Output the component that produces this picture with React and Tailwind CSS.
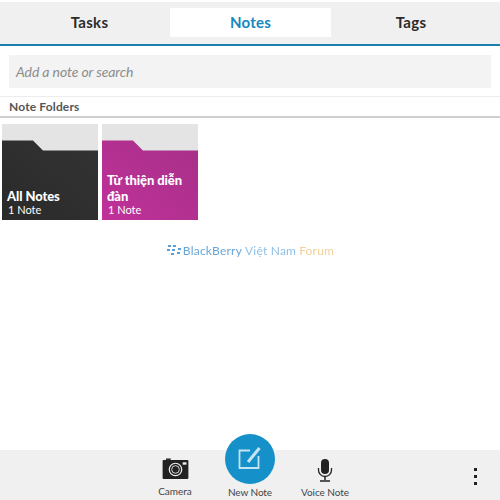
import React from "react";

const Folder = ({ id, name, from, to }) => {
  return (
    <div className="relative w-[96px] h-[96px] bg-[#e4e4e4] overflow-hidden">
      <svg className="absolute left-0 top-0 w-full h-full" viewBox="0 0 96 96">
        <defs>
          <linearGradient id={id} x1="0" y1="1" x2="1" y2="0">
            <stop offset="0" stopColor={from} />
            <stop offset="1" stopColor={to} />
          </linearGradient>
        </defs>
        <path d="M0 16.5 H31 L41 26.5 H96 V96 H0 Z" fill={`url(#${id})`} />
      </svg>
      <div className="absolute left-[5px] right-[2px] bottom-[3px] text-white">
        <div className="font-black text-[13px] leading-[16px] tracking-[-0.1px]">{name}</div>
        <div className="text-[11px] leading-[14px] ml-[1px] -mt-[1px]">1 Note</div>
      </div>
    </div>
  );
};

const App = () => {
  return (
    <div className="w-[500px] h-[500px] flex flex-col bg-white overflow-hidden font-['Lato',sans-serif]">
      <div className="h-[44px] mt-[2px] shrink-0 bg-[#f0f0f0] border-b-2 border-[#1a80ac] grid grid-cols-[170px_161px_169px] pt-[6px] pb-[7px]">
        <div className="flex items-center justify-center font-bold text-[15px] text-[#2b2b2b] tracking-[0.3px] pl-[9px]">Tasks</div>
        <div className="flex items-center justify-center bg-white font-bold text-[15px] text-[#1588c0] tracking-[0.2px]">Notes</div>
        <div className="flex items-center justify-center font-bold text-[15px] text-[#2b2b2b] tracking-[0.3px] pr-[9px]">Tags</div>
      </div>

      <div className="px-[9px] pt-[9px] pb-[8px] border-b border-[#ececec]">
        <div className="h-[33px] bg-[#f3f3f3] flex items-center px-[7px] text-[14px] italic text-[#8c8c8c] tracking-[-0.1px]">
          Add a note or search
        </div>
      </div>

      <div className="h-[21px] pl-[9px] flex items-center font-bold text-[12px] text-[#555] border-b-2 border-[#cfcfcf] tracking-[0.15px]">
        Note Folders
      </div>

      <div className="flex gap-[4px] pl-[2px] pt-[6px]">
        <Folder id="dark" name="All Notes" from="#2a2a2a" to="#333333" />
        <Folder id="pink" name="Từ thiện diễn đàn" from="#c0319a" to="#a63088" />
      </div>

      <div className="flex-1">
        <div className="mt-[22px] ml-[1px] flex items-center justify-center gap-[2px] text-[12px] blur-[0.5px] tracking-[0.2px]">
          <svg width="14" height="12" viewBox="0 0 14 12" fill="#5b9fd6">
            <rect x="1" y="0" width="3" height="2" />
            <rect x="6" y="0" width="3" height="2" />
            <rect x="0" y="4" width="3" height="2" />
            <rect x="5" y="4" width="3" height="2" />
            <rect x="11" y="3" width="3" height="2" />
            <rect x="4" y="8" width="3" height="2" />
            <rect x="10" y="7" width="3" height="2" />
          </svg>
          <span className="text-[#6aa5d8]">BlackBerry</span>
          <span className="text-[#8fbfe6] ml-[1px]">Việt Nam</span>
          <span className="text-[#f2cf9a] ml-[1px]">Forum</span>
        </div>
      </div>

      <div className="relative h-[50px] shrink-0 bg-[#f0f0f0] text-[10px] text-[#444]">
        <div className="absolute left-[225px] top-[-16px] w-[50px] h-[50px] rounded-full bg-[#1590c8] flex items-center justify-center">
          <svg width="24" height="24" viewBox="0 0 24 24" fill="none" stroke="#c4e4f3" strokeWidth="1.8">
            <path d="M12 3.5 H1.5 V21 H20.5 V9" />
            <path d="M10 15 L21.5 1" strokeWidth="3" />
          </svg>
        </div>
        <div className="absolute left-[150px] top-[8px] w-[50px] flex flex-col items-center">
          <svg width="27" height="21" viewBox="0 0 28 22">
            <path d="M4 0.5 H9 V2 H4 Z" fill="#222" />
            <rect x="0.5" y="2" width="27" height="20" rx="1" fill="#222" />
            <circle cx="14" cy="12" r="6.5" fill="none" stroke="#eee" strokeWidth="1.3" />
            <circle cx="14" cy="12" r="4" fill="none" stroke="#ddd" strokeWidth="1" />
            <rect x="21.5" y="4.5" width="4" height="2.5" fill="#eee" />
          </svg>
          <span className="mt-[6px] leading-[12px]">Camera</span>
        </div>
        <div className="absolute left-[225px] top-[36px] w-[50px] text-center leading-[12px] tracking-[-0.1px]">New Note</div>
        <div className="absolute left-[295px] top-[9px] w-[60px] flex flex-col items-center">
          <svg width="16" height="23" viewBox="0 0 16 23" fill="none">
            <rect x="4" y="0" width="8" height="15" rx="4" fill="#222" />
            <path d="M1.5 9 V11 A6.5 6.5 0 0 0 14.5 11 V9" stroke="#222" strokeWidth="1.3" />
            <path d="M8 17 V21 M3 22 H13" stroke="#222" strokeWidth="1.5" />
          </svg>
          <span className="mt-[4px] leading-[12px] tracking-[-0.05px]">Voice Note</span>
        </div>
        <div className="absolute left-[474px] top-[18px] flex flex-col gap-[4px]">
          <div className="w-[3px] h-[3px] bg-[#222]" />
          <div className="w-[3px] h-[3px] bg-[#222]" />
          <div className="w-[3px] h-[3px] bg-[#222]" />
        </div>
      </div>
    </div>
  );
};

export default App;
